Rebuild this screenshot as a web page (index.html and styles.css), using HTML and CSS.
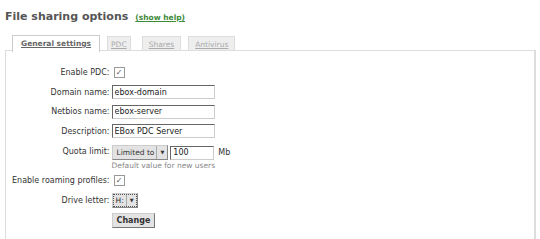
FILE: index.html
```html
<!DOCTYPE html>
<html lang="en">
<head>
  <meta charset="UTF-8" />
  <title>File sharing options</title>
  <link rel="stylesheet" href="styles.css">
</head>
<body>
  <div class="title">
    <h1>File sharing options</h1>
    <a class="help" href="#">(show help)</a>
  </div>
  <ul class="tabs">
    <li class="active"><a href="#">General settings</a></li>
    <li class="pdc"><a href="#">PDC</a></li>
    <li><a href="#">Shares</a></li>
    <li><a href="#">Antivirus</a></li>
  </ul>
  <div class="panel">
    <table class="form">
      <tr>
        <td class="label">Enable PDC:</td>
        <td><span class="check">&#10003;</span></td>
      </tr>
      <tr>
        <td class="label">Domain name:</td>
        <td><input class="text" type="text" value="ebox-domain"></td>
      </tr>
      <tr>
        <td class="label">Netbios name:</td>
        <td><input class="text" type="text" value="ebox-server"></td>
      </tr>
      <tr>
        <td class="label">Description:</td>
        <td><input class="text" type="text" value="EBox PDC Server"></td>
      </tr>
      <tr>
        <td class="label top">Quota limit:</td>
        <td>
          <div class="quota">
            <span class="select">Limited to<span class="arrow">&#9660;</span></span>
            <input class="text small" type="text" value="100">
            <span class="unit">Mb</span>
          </div>
          <div class="note">Default value for new users</div>
        </td>
      </tr>
      <tr>
        <td class="label">Enable roaming profiles:</td>
        <td><span class="check">&#10003;</span></td>
      </tr>
      <tr>
        <td class="label">Drive letter:</td>
        <td><span class="select drive">H:<span class="arrow">&#9660;</span></span></td>
      </tr>
      <tr>
        <td></td>
        <td><button class="btn">Change</button></td>
      </tr>
    </table>
  </div>
</body>
</html>
```

FILE: styles.css
```css
body {
  margin: 0;
  padding: 10px 4px 0 5px;
  background: #fff;
  font-family: "DejaVu Sans", Verdana, sans-serif;
  font-size: 8px;
  color: #333;
}
.title {
  display: flex;
  align-items: baseline;
  gap: 7px;
  height: 16px;
}
h1 {
  margin: 0;
  font-size: 11px;
  font-weight: bold;
  color: #555;
}
.help {
  color: #3d8a3a;
  font-size: 7.5px;
  font-weight: bold;
}
.tabs {
  list-style: none;
  margin: 9px 0 0 0;
  padding: 0 0 0 7px;
  display: flex;
  gap: 7px;
  height: 15px;
}
.tabs li {
  background: #eee;
  border: 1px solid #ddd;
  border-bottom: none;
  padding: 0 6px;
  line-height: 15px;
  margin-top: 1px;
}
.tabs li.pdc {
  padding: 0 3px;
  margin-right: 4px;
}
.tabs li a {
  color: #aaa;
  font-size: 7.5px;
}
.tabs li.active {
  background: #fff;
  border-color: #ccc;
  margin-top: 0;
  height: 16px;
  padding: 0 8px;
  position: relative;
  z-index: 1;
}
.tabs li.active a {
  color: #666;
  font-weight: bold;
}
.panel {
  border: 1px solid #ddd;
  border-right: 2px solid #ddd;
  border-bottom: 2px solid #aaa;
  height: 180px;
  padding-top: 12px;
}
.form {
  border-collapse: collapse;
}
.form td {
  padding: 0;
  height: 19.5px;
  vertical-align: middle;
}
.form td.label {
  text-align: right;
  padding-left: 6px;
  padding-right: 2px;
  width: 95px;
  color: #333;
  white-space: nowrap;
}
.form td.label.top {
  vertical-align: top;
  padding-top: 6px;
}
.check {
  display: inline-block;
  width: 9px;
  height: 9px;
  border: 1px solid #999;
  background: #fff;
  font-size: 8px;
  line-height: 9px;
  text-align: center;
  color: #555;
  margin-left: 2px;
}
.text {
  width: 97px;
  height: 12px;
  box-sizing: content-box;
  border: 1px solid #666;
  border-right-color: #ccc;
  border-bottom-color: #ccc;
  padding: 0 2px;
  font-family: "DejaVu Sans", sans-serif;
  font-size: 8px;
  color: #222;
  margin: 0;
}
.text.small {
  width: 38px;
}
.quota {
  display: flex;
  align-items: center;
  gap: 2px;
  padding-top: 4px;
}
.select {
  display: inline-flex;
  align-items: center;
  gap: 2px;
  height: 13px;
  padding: 0 0 0 4px;
  background: #e3e3e3;
  border: 1px solid #ccc;
  border-right-color: #888;
  border-bottom-color: #888;
  color: #333;
  font-size: 7.5px;
}
.arrow {
  font-size: 5px;
  padding: 0 3px;
  border-left: 1px solid #aaa;
  line-height: 13px;
  color: #333;
}
.select.drive {
  outline: 1px dotted #555;
  outline-offset: -2px;
  padding-left: 3px;
}
.unit {
  margin-left: 2px;
  color: #333;
}
.note {
  color: #888;
  font-size: 7.5px;
  margin-top: 1px;
  margin-bottom: 1px;
}
.btn {
  font-family: "DejaVu Sans", sans-serif;
  font-size: 8px;
  font-weight: bold;
  color: #333;
  background: #e3e3e3;
  border: 1px solid #ccc;
  border-right-color: #777;
  border-bottom-color: #777;
  padding: 2px 4px;
  margin-top: 1px;
}
```
